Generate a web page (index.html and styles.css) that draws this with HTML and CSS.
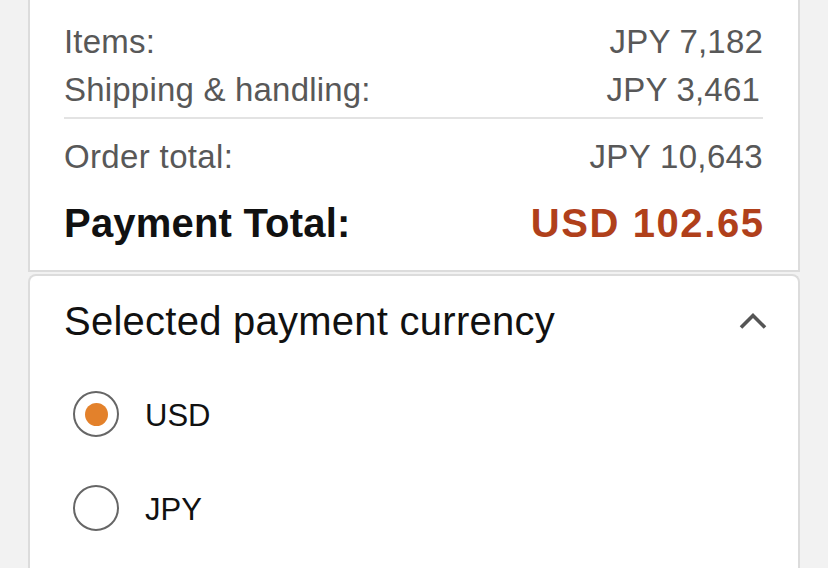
FILE: index.html
```html
<!DOCTYPE html>
<html lang="en">
<head>
<meta charset="utf-8">
<title>Order summary</title>
<link rel="stylesheet" href="styles.css">
</head>
<body>
<div class="page">
  <section class="card summary">
    <div class="row"><span>Items:</span><span>JPY 7,182</span></div>
    <div class="row"><span>Shipping &amp; handling:</span><span class="nudge">JPY 3,461</span></div>
    <hr class="sep">
    <div class="row order"><span>Order total:</span><span>JPY 10,643</span></div>
    <div class="row total"><span>Payment Total:</span><span class="price">USD 102.65</span></div>
  </section>
  <section class="card currency">
    <div class="head">
      <h2 class="title">Selected payment currency</h2>
      <svg class="chev" width="28" height="18" viewBox="0 0 28 18"><polyline points="2,15.5 14,3.5 26,15.5" fill="none" stroke="#555" stroke-width="3.6"/></svg>
    </div>
    <label class="opt"><span class="radio on"><span class="dot"></span></span><span class="opt-text">USD</span></label>
    <label class="opt"><span class="radio"></span><span class="opt-text">JPY</span></label>
  </section>
</div>
</body>
</html>
```

FILE: styles.css
```css
html, body {
  margin: 0;
  padding: 0;
  background: #f2f2f2;
  font-family: "Liberation Sans", Arial, sans-serif;
  overflow: hidden;
}
.page {
  padding: 0 28px;
}
.card {
  background: #fff;
  border: 2px solid #dcdcdc;
}
.summary {
  border-top: none;
  padding: 18px 35px 23px 34px;
}
.row {
  display: flex;
  justify-content: space-between;
  font-size: 33px;
  line-height: 48px;
  color: #585858;
  letter-spacing: 0.2px;
}
.order {
  letter-spacing: 0.35px;
}
.nudge {
  margin-right: 3px;
}
.sep {
  border: none;
  height: 2px;
  background: #e3e3e3;
  margin: 3px 0 14px 0;
}
.total {
  margin-top: 18px;
  font-size: 40px;
  font-weight: bold;
  color: #111;
}
.price {
  color: #b0401b;
  letter-spacing: 1.6px;
  margin-right: -1.6px;
}
.currency {
  margin-top: 2px;
  border-radius: 8px 8px 0 0;
  border-bottom: none;
  padding: 21px 31px 14px 34px;
}
.head {
  display: flex;
  align-items: center;
  justify-content: space-between;
  height: 48px;
  margin-bottom: 22px;
}
.title {
  margin: 0;
  font-size: 40px;
  font-weight: normal;
  line-height: 48px;
  color: #111;
  letter-spacing: 0.25px;
}
.chev {
  display: block;
}
.opt {
  display: flex;
  align-items: center;
  height: 94px;
}
.radio {
  box-sizing: border-box;
  width: 46px;
  height: 46px;
  border: 2px solid #666;
  border-radius: 50%;
  margin-left: 9px;
  display: flex;
  align-items: center;
  justify-content: center;
}
.dot {
  width: 23px;
  height: 23px;
  border-radius: 50%;
  background: #e3812b;
}
.opt-text {
  margin-left: 26px;
  margin-top: 4px;
  font-size: 31px;
  color: #111;
  line-height: 40px;
}
```
